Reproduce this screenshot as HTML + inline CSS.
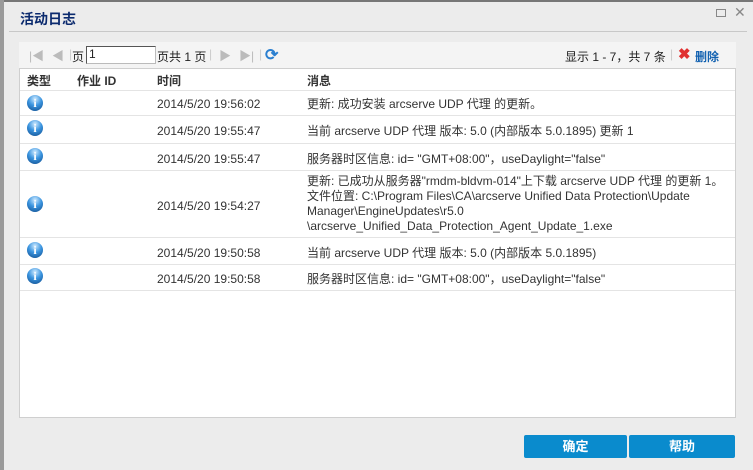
<!DOCTYPE html>
<html><head><meta charset="utf-8"><style>
*{margin:0;padding:0;box-sizing:border-box}
body{width:753px;height:470px;overflow:hidden;background:#ececec;font-family:"Liberation Sans","Noto Sans CJK SC",sans-serif;font-size:12px;color:#333;position:relative}
.abs{position:absolute}
.strip{left:0;top:0;width:4px;height:470px;background:#9a9a9a}
.topb{left:0;top:0;width:753px;height:2px;background:#777}
.title{left:20px;top:9px;font-size:14px;font-weight:bold;color:#0b2a6e}
.sep{left:9px;top:31px;width:738px;height:1px;background:#c8c8c8}
.tb{left:19px;top:42px;width:717px;height:27px;background:#f4f4f4}
.grid{left:19px;top:68px;width:717px;height:350px;background:#fff;border:1px solid #cfcfcf}
.row{position:absolute;left:0;width:715px;border-bottom:1px solid #e4e4e4}
.ic{position:absolute;left:7px;width:16px;height:16px;border-radius:50%;background:radial-gradient(circle at 50% 25%,#cfeaff,#3b95e0 45%,#0d4a8a);color:#fff;font:bold 12px "Liberation Serif",serif;text-align:center;line-height:16px}
.t{position:absolute;left:137px}
.m{position:absolute;left:287px;line-height:15px}
.hd{font-weight:bold;color:#333;position:absolute;top:3px}
.btn{top:435px;height:23px;background:#0a8bcd;color:#fff;font-weight:bold;font-size:13px;text-align:center;line-height:23px;border-radius:2px}
</style></head><body>
<div class="abs topb"></div>
<div class="abs strip"></div>
<div class="abs title">活动日志</div>
<div class="abs" style="left:716px;top:9px;width:10px;height:8px;border:1px solid #888"></div>
<div class="abs" style="left:734px;top:4px;color:#888;font-size:14px">✕</div>
<div class="abs sep"></div>
<div class="abs tb">
 <span class="abs" style="left:10px;top:5px;color:#bbb">|◀</span>
 <span class="abs" style="left:33px;top:5px;color:#bbb">◀</span>
 <span class="abs" style="left:50px;top:5px;color:#ccc">|</span>
 <span class="abs" style="left:53px;top:6px;color:#222">页</span>
 <div class="abs" style="left:67px;top:4px;width:70px;height:18px;background:#fff;border:1px solid #777;border-color:#555 #bbb #bbb #555;padding-left:2px;color:#222">1</div>
 <span class="abs" style="left:138px;top:6px;color:#222">页共 1 页</span>
 <span class="abs" style="left:190px;top:5px;color:#ccc">|</span>
 <span class="abs" style="left:200px;top:5px;color:#bbb">▶</span>
 <span class="abs" style="left:220px;top:5px;color:#bbb">▶|</span>
 <span class="abs" style="left:240px;top:5px;color:#ccc">|</span>
 <span class="abs" style="left:246px;top:3px;color:#2a7fd0;font-size:16px;font-weight:bold">⟳</span>
 <span class="abs" style="left:546px;top:6px;color:#222">显示 1 - 7，共 7 条</span>
 <span class="abs" style="left:651px;top:5px;color:#ccc">|</span>
 <span class="abs" style="left:659px;top:3px;color:#e03030;font-weight:bold;font-size:15px">✖</span>
 <span class="abs" style="left:676px;top:6px;color:#1060b0;font-weight:bold">删除</span>
</div>
<div class="abs grid">
 <div class="row" style="top:0;height:22px"><span class="hd" style="left:7px">类型</span><span class="hd" style="left:57px">作业 ID</span><span class="hd" style="left:137px">时间</span><span class="hd" style="left:287px">消息</span></div>
 <div class="row" style="top:22px;height:25px"><div class="ic" style="top:4px">i</div><span class="t" style="top:6px">2014/5/20 19:56:02</span><span class="m" style="top:6px">更新: 成功安装 arcserve UDP 代理 的更新。</span></div>
 <div class="row" style="top:47px;height:28px"><div class="ic" style="top:4px">i</div><span class="t" style="top:8px">2014/5/20 19:55:47</span><span class="m" style="top:8px">当前 arcserve UDP 代理 版本: 5.0 (内部版本 5.0.1895) 更新 1</span></div>
 <div class="row" style="top:75px;height:27px"><div class="ic" style="top:4px">i</div><span class="t" style="top:8px">2014/5/20 19:55:47</span><span class="m" style="top:8px">服务器时区信息: id= "GMT+08:00"，useDaylight="false"</span></div>
 <div class="row" style="top:102px;height:67px"><div class="ic" style="top:25px">i</div><span class="t" style="top:28px">2014/5/20 19:54:27</span><span class="m" style="top:3px">更新: 已成功从服务器"rmdm-bldvm-014"上下载 arcserve UDP 代理 的更新 1。<br>文件位置: C:\Program Files\CA\arcserve Unified Data Protection\Update<br>Manager\EngineUpdates\r5.0<br>\arcserve_Unified_Data_Protection_Agent_Update_1.exe</span></div>
 <div class="row" style="top:169px;height:27px"><div class="ic" style="top:4px">i</div><span class="t" style="top:8px">2014/5/20 19:50:58</span><span class="m" style="top:8px">当前 arcserve UDP 代理 版本: 5.0 (内部版本 5.0.1895)</span></div>
 <div class="row" style="top:196px;height:26px"><div class="ic" style="top:3px">i</div><span class="t" style="top:7px">2014/5/20 19:50:58</span><span class="m" style="top:7px">服务器时区信息: id= "GMT+08:00"，useDaylight="false"</span></div>
</div>
<div class="abs btn" style="left:524px;width:103px">确定</div>
<div class="abs btn" style="left:629px;width:106px">帮助</div>
</body></html>
